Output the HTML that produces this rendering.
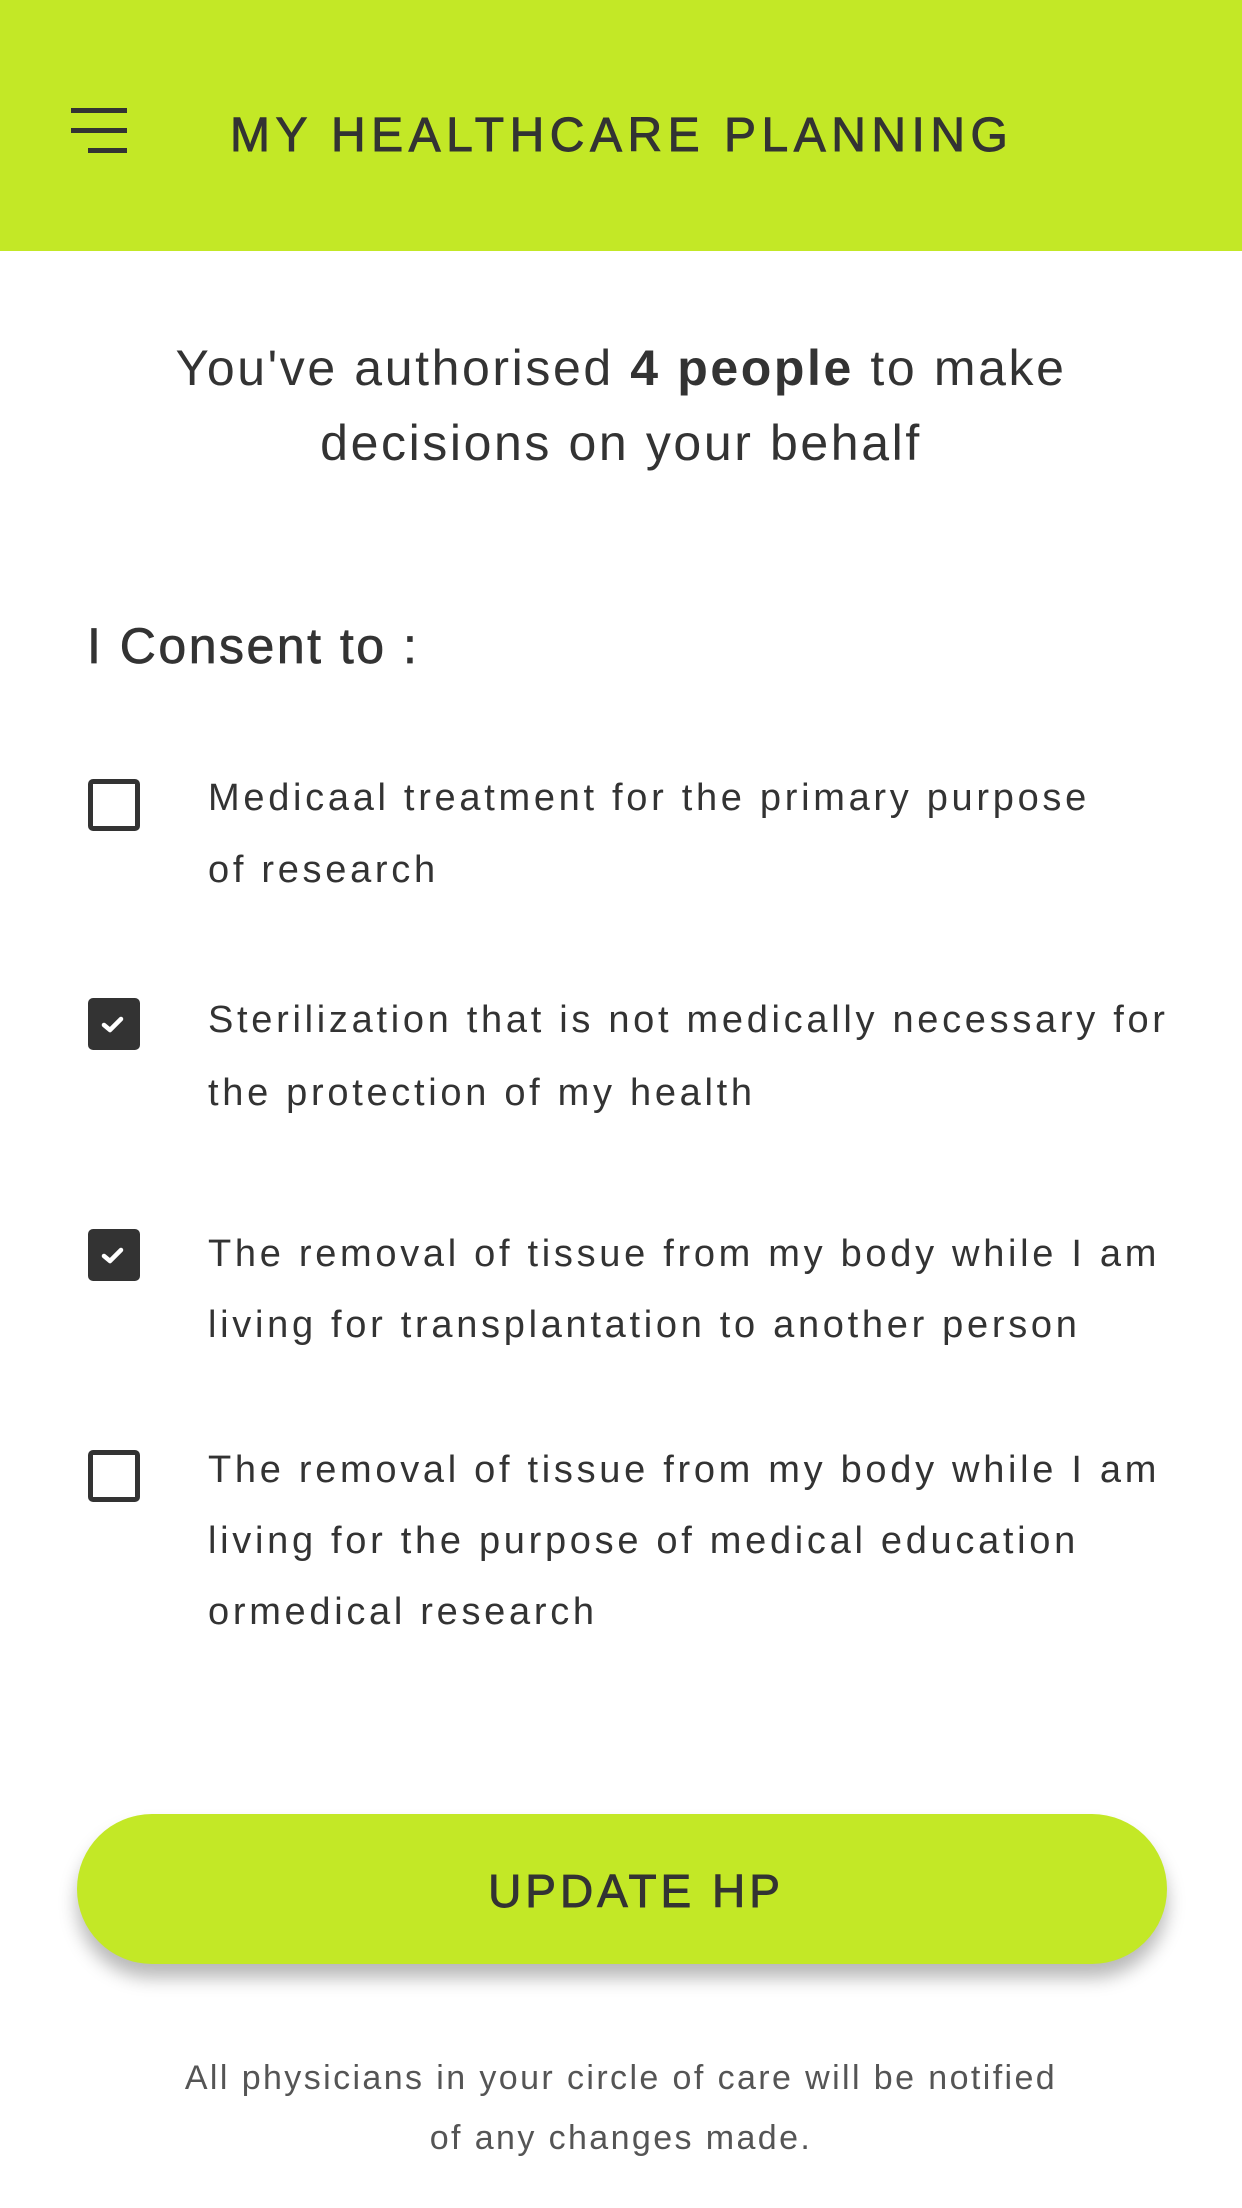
<!DOCTYPE html>
<html><head><meta charset="utf-8"><style>
*{margin:0;padding:0;box-sizing:border-box}
body{width:1242px;height:2208px;background:#fff;position:relative;overflow:hidden;font-family:"Liberation Sans",sans-serif;color:#333}
.t{position:absolute;line-height:1;white-space:nowrap}
.hdr{position:absolute;left:0;top:0;width:1242px;height:251px;background:#c3e826}
.bar{position:absolute;height:5px;background:#333}
.cb{position:absolute;left:88px;width:52px;height:52px;border:5px solid #333;border-radius:5px;background:#fff}
.cb.on{background:#333}
.cb svg{position:absolute;left:0;top:0}
.it{left:208px;font-size:38px;letter-spacing:3.7px}
.btn{position:absolute;left:77px;top:1814px;width:1090px;height:150px;border-radius:75px;background:#c3e826;box-shadow:0 14px 18px rgba(0,0,0,0.28)}
</style></head><body>
<div class="hdr">
<div class="bar" style="left:71px;top:108px;width:56px"></div>
<div class="bar" style="left:71px;top:128px;width:56px"></div>
<div class="bar" style="left:88px;top:148px;width:39px"></div>
<div class="t" style="left:230px;top:112px;font-size:48px;letter-spacing:5.5px;-webkit-text-stroke:0.9px #333">MY HEALTHCARE PLANNING</div>
</div>

<div class="t" style="left:0;width:1242px;text-align:center;top:343px;font-size:50px;letter-spacing:2.6px">You've authorised <b>4 people</b> to make</div>
<div class="t" style="left:0;width:1242px;text-align:center;top:418px;font-size:50px;letter-spacing:2.6px">decisions on your behalf</div>

<div class="t" style="left:87px;top:621px;font-size:50px;letter-spacing:2.5px;-webkit-text-stroke:0.7px #333">I Consent to :</div>

<div class="cb" style="top:779px"></div>
<div class="t it" style="top:779px">Medicaal treatment for the primary purpose</div>
<div class="t it" style="top:851px">of research</div>

<div class="cb on" style="top:998px"><svg width="42" height="42"><path d="M11 22 L17 27 L28 16" stroke="#fff" stroke-width="4.5" fill="none" stroke-linecap="round" stroke-linejoin="round"/></svg></div>
<div class="t it" style="top:1001px">Sterilization that is not medically necessary for</div>
<div class="t it" style="top:1074px">the protection of my health</div>

<div class="cb on" style="top:1229px"><svg width="42" height="42"><path d="M11 22 L17 27 L28 16" stroke="#fff" stroke-width="4.5" fill="none" stroke-linecap="round" stroke-linejoin="round"/></svg></div>
<div class="t it" style="top:1235px">The removal of tissue from my body while I am</div>
<div class="t it" style="top:1306px">living for transplantation to another person</div>

<div class="cb" style="top:1450px"></div>
<div class="t it" style="top:1451px">The removal of tissue from my body while I am</div>
<div class="t it" style="top:1522px">living for the purpose of medical education</div>
<div class="t it" style="top:1593px">ormedical research</div>

<div class="btn"></div>
<div class="t" style="left:91px;width:1090px;text-align:center;top:1868px;font-size:46px;letter-spacing:4px;-webkit-text-stroke:0.9px #333">UPDATE HP</div>

<div class="t" style="left:0;width:1242px;text-align:center;top:2061px;font-size:34px;letter-spacing:2.4px;color:#555">All physicians in your circle of care will be notified</div>
<div class="t" style="left:0;width:1242px;text-align:center;top:2121px;font-size:34px;letter-spacing:2.4px;color:#555">of any changes made.</div>
</body></html>
